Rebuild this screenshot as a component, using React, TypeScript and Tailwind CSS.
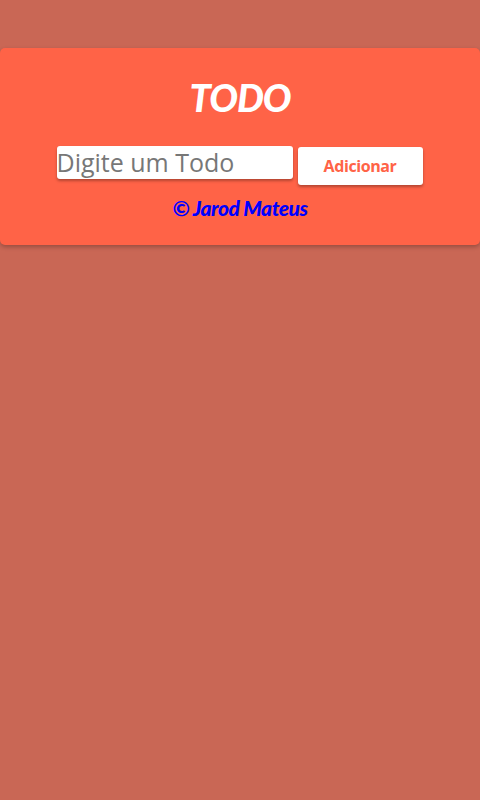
import React from "react";

export default function App() {
  return (
    <div className="min-h-[800px] w-full bg-[#c96755] pt-[48px] font-['Open_Sans',_'Noto_Sans',_sans-serif]">
      <div className="bg-[#ff6347] rounded-[5px] shadow-[0_2px_4px_rgba(0,0,0,0.25)] h-[197px] flex flex-col items-center">
        <h1 className="mt-[26px] text-white text-[38px] leading-[46px] font-black italic tracking-[-1px] font-['Lato',_'Open_Sans',_sans-serif]">
          TODO
        </h1>
        <div className="mt-[26px] flex items-start gap-[5px] ml-[-1px]">
          <input
            placeholder="Digite um Todo"
            className="w-[236px] h-[33px] bg-white rounded-[3px] shadow-[0_2px_3px_rgba(0,0,0,0.3)] outline-none text-[25px] leading-[33px] px-0 placeholder:text-[#777] text-[#333] font-['Open_Sans',_sans-serif]"
          />
          <button className="mt-[1px] w-[125px] h-[38px] bg-white rounded-[3px] shadow-[0_2px_3px_rgba(0,0,0,0.3)] text-[#ff6347] text-[16px] font-bold tracking-[-0.4px] font-['Open_Sans',_sans-serif]">
            Adicionar
          </button>
        </div>
        <p className="mt-[10px] text-[#0000ff] text-[21px] font-black italic leading-[26px] tracking-[-0.5px] font-['Lato',_'Open_Sans',_sans-serif]">
          © Jarod Mateus
        </p>
      </div>
    </div>
  );
}
